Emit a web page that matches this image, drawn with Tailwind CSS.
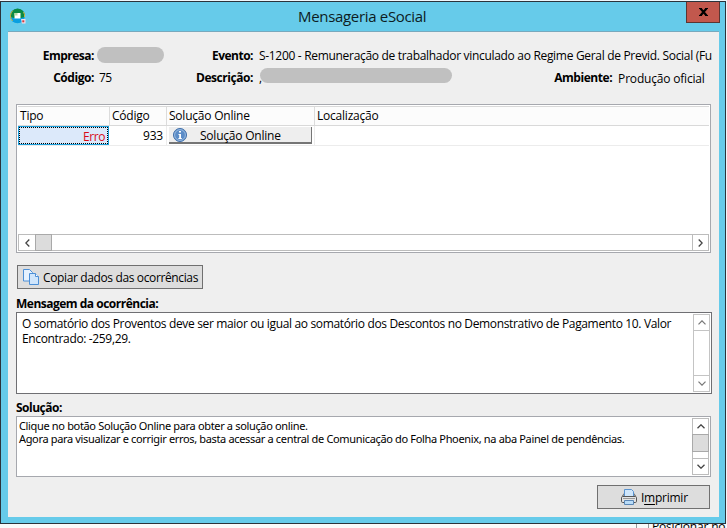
<!DOCTYPE html>
<html lang="pt-BR">
<head>
    <meta charset="UTF-8">
    <meta name="viewport" content="width=device-width, initial-scale=1.0">
    <script src="https://cdn.jsdelivr.net/npm/@tailwindcss/browser@4"></script>
    <title>Mensageria eSocial</title>
</head>
<body class="relative w-[727px] h-[528px] overflow-hidden bg-[#eef6fb] pt-px font-['Open_Sans','Noto_Sans',sans-serif] text-[12px] leading-4 text-black">
    <!-- window -->
    <div class="flex flex-col w-[726px] h-[523px] border border-[#2b333b] bg-[#66cbea] pl-[7px] pr-[6px] pb-[6px]">
        <header class="flex h-[29px] shrink-0">
            <svg class="mt-[6px] ml-[2px] w-4 h-4" viewBox="0 0 16 16">
                <circle cx="7.5" cy="8" r="7.3" fill="#0a9fe0"/>
                <path d="M.4 9A7.3 7.3 0 1 1 14.8 9L11 10H4z" fill="#0b8a43"/>
                <path d="M2.5 13A7.2 7.2 0 0 1 2.8 2.6" fill="none" stroke="#d0b23c" stroke-width="1"/>
                <path d="M13.5 4a7 7 0 0 1 1 5" fill="none" stroke="#d0b23c" stroke-width="1"/>
                <path d="M4.5 5h6v5.5h-6z" fill="#fff"/>
                <path d="M4.5 5h3v2.5h-3z" fill="#b9dca4"/>
                <path d="M11 11h4.5v4.5H12z" fill="#f3dfe8"/>
                <path d="M12.3 12.3h2v2h-2z" fill="#d23a3a"/>
            </svg>
            <h1 class="ml-[272px] mt-[4px] w-[130px] whitespace-nowrap text-[15px] leading-5 tracking-[-0.32px] text-[#0d1c22]">Mensageria eSocial</h1>
            <button class="ml-auto mr-[-1px] flex h-[21px] w-[34px] items-center justify-center border border-t-0 border-[#5b3532] bg-[#c2584d]">
                <svg class="w-[9px] h-[8px]" viewBox="0 0 9 8"><path d="M1.5 .5 7.5 7.5M7.5 .5 1.5 7.5" stroke="#000" stroke-width="2.2"/><path d="M0 .5h3M6 .5h3M0 7.5h3M6 7.5h3" stroke="#000"/></svg>
            </button>
        </header>

        <main class="flex flex-col flex-1 border-t border-[#78a9bd] bg-[#efefef] pl-2 pr-[6px]">
            <div class="flex h-[17px] mt-[16px] whitespace-nowrap *:shrink-0">
                <b class="w-[78px] text-right tracking-[-0.5px]">Empresa:</b>
                <span class="ml-[3px] mt-[-1px] h-4 w-[67px] rounded-full bg-[#c0c0c0]"></span>
                <b class="w-[89px] text-right tracking-[-0.5px]">Evento:</b>
                <span class="ml-[6px] tracking-[-0.31px]">S-1200 - Remuneração de trabalhador vinculado ao Regime Geral de Previd. Social (Fu</span>
            </div>
            <div class="flex h-[17px] mt-[5px] whitespace-nowrap *:shrink-0">
                <b class="w-[78px] text-right tracking-[-0.45px]">Código:</b>
                <span class="ml-[5px] w-[60px] tracking-[-0.5px]">75</span>
                <b class="w-[94px] text-right tracking-[-0.45px]">Descrição:</b>
                <span class="ml-[6px]">,</span>
                <span class="ml-[-2px] mt-[-2px] h-[15px] w-[192px] rounded-full bg-[#c0c0c0]"></span>
                <b class="w-[160px] text-right tracking-[-0.45px]">Ambiente:</b>
                <span class="ml-[6px] mt-px tracking-[-0.19px]">Produção oficial</span>
            </div>

            <!-- occurrences grid -->
            <section class="flex flex-col mt-[17px] h-[149px] w-[695px] shrink-0 border border-[#a6a8ae] bg-white p-px whitespace-nowrap">
                <div class="flex h-[20px] border-y border-[#d9d9d9] bg-[#fcfcfc] tracking-[-0.22px] leading-[18px]">
                    <div class="w-[92px] border-r border-[#dcdcdc] pl-[2px]">Tipo</div>
                    <div class="w-[57px] border-r border-[#dcdcdc] pl-[2px]">Código</div>
                    <div class="w-[148px] border-r border-[#dcdcdc] pl-[2px]">Solução Online</div>
                    <div class="pl-[2px]">Localização</div>
                </div>
                <div class="flex h-[20px] border-b border-[#ececec] tracking-[-0.22px] leading-[20px]">
                    <div class="h-[19px] w-[91px] shrink-0 border border-[#1a9fdc] bg-[#dce9fa]"><div class="h-[17px] border border-dotted border-black pr-[2px] text-right leading-[17px] tracking-[-0.4px] text-[#d80c18]">Erro</div></div>
                    <div class="w-[58px] border-r border-[#ececec] pr-[3px] text-right">933</div>
                    <div class="w-[148px] border-r border-[#ececec] pl-[2px] pt-px">
                        <button class="flex h-[17px] w-[143px] items-center border-b-2 border-r border-[#757575] bg-[#eeeeee] pl-[4px] leading-4">
                            <svg class="w-[14px] h-[14px]" viewBox="0 0 14 14"><circle cx="7" cy="7" r="6.5" fill="#5b8cc7" stroke="#3f6ea9"/><circle cx="7" cy="7" r="5.4" fill="none" stroke="#a9c6e6" stroke-width=".8"/><path d="M6 3h2v1.6H6zM5.5 6H8v4h.8v1H5.4v-1h.8V7h-.7z" fill="#fff"/></svg>
                            <span class="ml-[13px] pt-[2px]">Solução Online</span>
                        </button>
                    </div>
                </div>
                <div class="mt-auto flex h-[17px] justify-between border border-[#bcbcbc]">
                    <div class="flex">
                        <div class="flex w-[16px] items-center justify-center"><svg class="w-[5px] h-[8px]" viewBox="0 0 5 8"><path d="M4.3 .5.8 4l3.5 3.5" fill="none" stroke="#444" stroke-width="1.3"/></svg></div>
                        <div class="-my-px w-[17px] border border-[#a9a9a9] bg-[#dcdcdc]"></div>
                    </div>
                    <div class="flex w-[16px] items-center justify-center border-l border-[#bcbcbc]"><svg class="w-[5px] h-[8px]" viewBox="0 0 5 8"><path d="M.7 .5 4.2 4 .7 7.5" fill="none" stroke="#444" stroke-width="1.3"/></svg></div>
                </div>
            </section>

            <button class="mt-[12px] ml-px flex h-[24px] w-[186px] shrink-0 items-center border border-[#707070] bg-[#dddddd] pl-[5px] whitespace-nowrap">
                <svg class="w-4 h-4 shrink-0" viewBox="0 0 16 16"><path d="M.5 .5h6l3 3v8.500h-9z" fill="#e5f2ff" stroke="#4c8fd6"/><path d="M6.500 4.500h6l3 3v8h-9z" fill="#cfe5fb" stroke="#4c8fd6"/><path d="M12.500 4.500v3h3" fill="#fff" stroke="#4c8fd6"/></svg>
                <span class="ml-[4px] mt-px tracking-[-0.37px]">Copiar dados das ocorrências</span>
            </button>

            <h2 class="mt-[6px] h-[17px] shrink-0 pt-px font-bold tracking-[-0.5px]">Mensagem da ocorrência:</h2>
            <section class="flex h-[82px] w-[696px] shrink-0 justify-between border border-[#6f6f73] bg-white p-px">
                <p class="ml-[4px] mt-[2px] whitespace-nowrap leading-[15px] tracking-[-0.35px]">O somatório dos Proventos deve ser maior ou igual ao somatório dos Descontos no Demonstrativo de Pagamento 10. Valor<br>Encontrado: -259,29.</p>
                <div class="flex w-[17px] flex-col justify-between border border-[#c4c4c4]">
                    <div class="flex h-[16px] items-center justify-center border-b border-[#c4c4c4]"><svg class="w-[8px] h-[5px]" viewBox="0 0 8 5"><path d="M.5 4.300 4 .8l3.500 3.500" fill="none" stroke="#777" stroke-width="1.2"/></svg></div>
                    <div class="flex h-[16px] items-center justify-center border-t border-[#c4c4c4]"><svg class="w-[8px] h-[5px]" viewBox="0 0 8 5"><path d="M.5 .7 4 4.200 7.500 .7" fill="none" stroke="#777" stroke-width="1.2"/></svg></div>
                </div>
            </section>

            <h2 class="mt-[5px] h-[17px] shrink-0 pt-px font-bold tracking-[-0.5px]">Solução:</h2>
            <section class="flex h-[61px] w-[695px] shrink-0 justify-between border border-[#a6a8ae] bg-white p-px">
                <p class="ml-px mt-[1px] whitespace-nowrap font-['Noto_Sans',sans-serif] text-[11px] leading-[13px] tracking-[-0.34px]">Clique no botão Solução Online para obter a solução online.<br>Agora para visualizar e corrigir erros, basta acessar a central de Comunicação do Folha Phoenix, na aba Painel de pendências.</p>
                <div class="flex w-[17px] flex-col border border-[#bcbcbc]">
                    <div class="flex h-[15px] items-center justify-center"><svg class="w-[8px] h-[5px]" viewBox="0 0 8 5"><path d="M.5 4.300 4 .8l3.500 3.500" fill="none" stroke="#444" stroke-width="1.3"/></svg></div>
                    <div class="-mx-px h-[18px] border border-[#a9a9a9] bg-[#dcdcdc]"></div>
                    <div class="mt-auto flex h-[16px] items-center justify-center border-t border-[#bcbcbc]"><svg class="w-[8px] h-[5px]" viewBox="0 0 8 5"><path d="M.5 .7 4 4.200 7.500 .7" fill="none" stroke="#444" stroke-width="1.3"/></svg></div>
                </div>
            </section>

            <button class="mt-[8px] ml-[581px] flex h-[24px] w-[113px] shrink-0 items-center border border-[#707070] bg-[#dddddd] pl-[23px]">
                <svg class="w-4 h-4" viewBox="0 0 16 16"><path d="M1.500 7 3 4.500h10L14.500 7z" fill="#ccc" stroke="#777"/><path d="M3.500 .5h7l2 2V8h-9z" fill="#cfe6fb" stroke="#5a93cf"/><rect x=".5" y="7.500" width="15" height="6" rx="1.200" fill="#e4e4e4" stroke="#555"/><path d="M2 9.500h12" stroke="#999"/><path d="M3.500 11.500h9v4h-9z" fill="#b9dcf8" stroke="#5a86b5"/></svg>
                <span class="ml-[4px] mt-px tracking-[-0.25px]">I<u class="underline-offset-2">m</u>primir</span>
            </button>
        </main>
    </div>
    <!-- form behind the window -->
    <div class="flex h-[4px] overflow-hidden bg-[#fafafa] pl-[636px] whitespace-nowrap">
        <div class="h-4 w-[12px] border-l border-[#999]"></div>
        <div class="h-4 w-[4px] border-l border-[#999]"></div>
        <span class="-mt-[5px] leading-4 tracking-[-0.19px]">Posicionar no</span>
    </div>
</body>
</html>
